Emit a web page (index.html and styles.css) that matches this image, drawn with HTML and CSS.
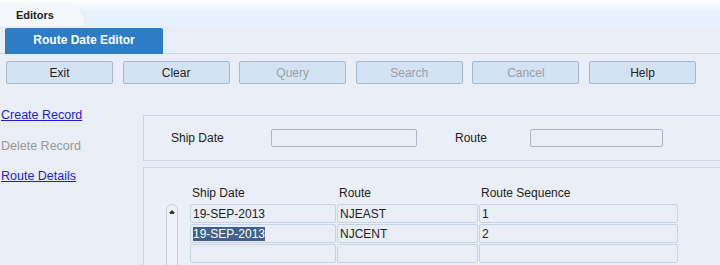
FILE: index.html
```html
<!DOCTYPE html>
<html lang="en">
<head>
    <meta charset="UTF-8">
    <title>Route Date Editor</title>
    <link rel="stylesheet" href="styles.css">
</head>
<body>
    <div class="tabbar">
        <div class="main-tab">Editors</div>
    </div>
    <div class="subtabs">
        <div class="sub-tab">Route Date Editor</div>
    </div>
    <div class="toolbar">
        <button class="btn">Exit</button>
        <button class="btn">Clear</button>
        <button class="btn" disabled>Query</button>
        <button class="btn" disabled>Search</button>
        <button class="btn" disabled>Cancel</button>
        <button class="btn">Help</button>
    </div>
    <div class="content">
        <div class="sidebar">
            <a href="#" class="side-link">Create Record</a>
            <span class="side-link disabled">Delete Record</span>
            <a href="#" class="side-link">Route Details</a>
        </div>
        <div class="panels">
            <div class="panel search-panel">
                <span class="lbl lbl-ship">Ship Date</span>
                <span class="field f-ship"></span>
                <span class="lbl lbl-route">Route</span>
                <span class="field f-route"></span>
            </div>
            <div class="panel grid-panel">
                <div class="scroll">
                    <span class="arrow"></span>
                </div>
                <div class="grid">
                    <div class="head">Ship Date</div>
                    <div class="head">Route</div>
                    <div class="head">Route Sequence</div>

                    <div class="cell">19-SEP-2013</div>
                    <div class="cell">NJEAST</div>
                    <div class="cell">1</div>

                    <div class="cell"><span class="sel">19-SEP-2013</span></div>
                    <div class="cell">NJCENT</div>
                    <div class="cell">2</div>

                    <div class="cell"></div>
                    <div class="cell"></div>
                    <div class="cell"></div>
                </div>
            </div>
        </div>
    </div>
</body>
</html>
```
FILE: styles.css
```css
body {
    margin: 0;
    width: 720px;
    height: 265px;
    overflow: hidden;
    background-color: #e9edf5;
    font-family: 'Liberation Sans', Arial, sans-serif;
    font-size: 12px;
    color: #222;
}

.tabbar {
    height: 26px;
    background: linear-gradient(#ffffff, #e6f1fd 45%, #e6f1fd);
    display: flex;
    align-items: flex-end;
}

.main-tab {
    width: 68px;
    height: 22px;
    padding-left: 16px;
    background-color: #f4f8fd;
    border-top-right-radius: 14px 22px;
    font-size: 11px;
    font-weight: bold;
    color: #222;
    line-height: 22px;
}

.subtabs {
    height: 25px;
    padding: 2px 0 0 5px;
    border-bottom: 1px solid #cbd7e6;
    display: flex;
    align-items: flex-end;
}

.sub-tab {
    width: 158px;
    height: 26px;
    margin-bottom: -1px;
    background-color: #2c7dc6;
    border-radius: 2px 2px 0 0;
    color: white;
    font-weight: bold;
    font-size: 12px;
    text-align: center;
    line-height: 25px;
}

.toolbar {
    display: flex;
    gap: 9.6px;
    padding: 7px 0 0 6px;
    height: 23px;
}

.btn {
    width: 107px;
    height: 23px;
    margin: 0;
    padding: 0;
    background-color: #d4e3f3;
    border: 1px solid #a8b7c9;
    border-radius: 2px;
    font-family: 'Liberation Sans', Arial, sans-serif;
    font-size: 12px;
    color: #222;
}

.btn:disabled { color: #9a9fa6; }

.content {
    display: flex;
    padding-top: 23px;
}

.sidebar {
    width: 142px;
    display: flex;
    flex-direction: column;
    gap: 14.5px;
    padding-left: 1px;
}

.side-link {
    font-size: 12.5px;
    line-height: 16px;
    color: #1d1dcc;
    text-decoration: underline;
}

.side-link.disabled {
    color: #999;
    text-decoration: none;
}

.panels {
    flex: 1;
    padding-top: 8px;
}

.panel {
    border: 1px solid #c8d4e6;
    border-right: none;
    background-color: #eaeef6;
}

.search-panel {
    height: 44px;
    display: flex;
    align-items: center;
}

.lbl { color: #222; }
.lbl-ship { margin-left: 27px; width: 100px; }
.lbl-route { margin-left: 38px; width: 75px; }

.field {
    display: block;
    height: 16px;
    border: 1px solid #aab6c6;
    border-radius: 2px;
    background-color: #eaeef6;
}

.f-ship { width: 144px; }
.f-route { width: 131px; }

.grid-panel {
    margin-top: 6px;
    height: 120px;
    display: flex;
    padding-top: 16px;
}

.scroll {
    margin: 20px 0 0 22px;
    width: 10px;
    height: 80px;
    border: 1px solid #c3cfe0;
    border-radius: 6px 6px 0 0;
    background-color: #edf1f7;
    display: flex;
    justify-content: center;
}

.arrow {
    margin-top: 5px;
    width: 0;
    height: 0;
    border-left: 3px solid transparent;
    border-right: 3px solid transparent;
    border-bottom: 3px solid #333;
    box-shadow: 0 2px 0 -1px #333;
}

.grid {
    margin-left: 12px;
    display: grid;
    grid-template-columns: 147px 142px 200px;
    grid-template-rows: 20px 20px 20px 20px;
    align-content: start;
}

.head {
    padding-left: 2px;
    line-height: 18px;
}

.cell {
    height: 17px;
    margin-right: 1px;
    border: 1px solid #c5d3e6;
    border-radius: 2px;
    background-color: #e9eef6;
    line-height: 18px;
    padding-left: 2px;
}

.sel {
    background-color: #3f5f8c;
    color: white;
}
```
